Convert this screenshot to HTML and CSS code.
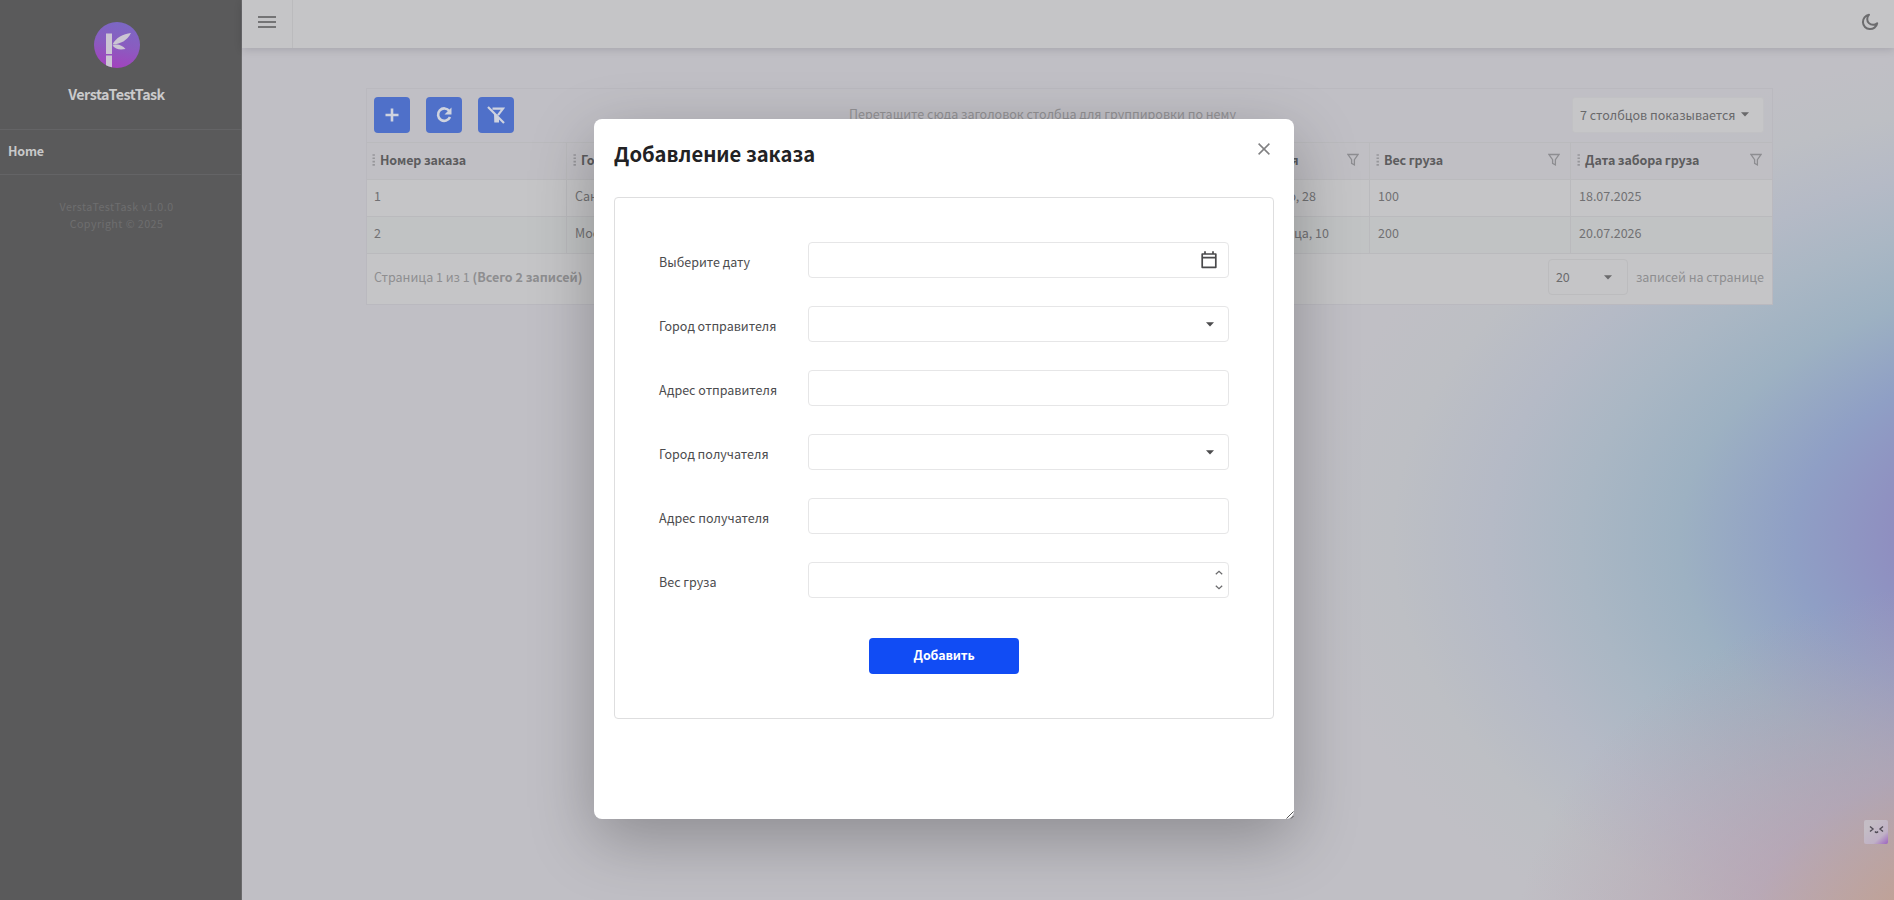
FILE: index.html
```html
<!DOCTYPE html>
<html lang="ru">
<head>
<meta charset="utf-8">
<title>VerstaTestTask</title>
<link rel="stylesheet" href="styles.css">
</head>
<body>
<svg class="defs" width="0" height="0">
  <symbol id="funnel" viewBox="0 0 12 14"><path d="M1 1.500h10L7.400 6.600v5.400L4.600 10.400v-3.800z" fill="none" stroke="currentColor" stroke-width="1.300"/></symbol>
  <symbol id="caret" viewBox="0 0 8 5"><path d="M0 .3h8L4 4.600z" fill="currentColor"/></symbol>
  <symbol id="grip" viewBox="0 0 4 12"><path d="M.5 1h2.400M.5 4.300h2.400M.5 7.600h2.400M.5 10.900h2.400" stroke="currentColor" stroke-width="1.600"/></symbol>
</svg>
<div class="app">
  <aside class="sidebar">
    <div class="brand">
      <svg width="46" height="46" viewBox="0 0 46 46">
        <defs><linearGradient id="logo" x1="0.6" y1="0" x2="0.4" y2="1"><stop offset="0" stop-color="#7b68c4"/><stop offset=".5" stop-color="#8a5cc0"/><stop offset="1" stop-color="#a342bd"/></linearGradient></defs>
        <circle cx="23" cy="23" r="23" fill="url(#logo)"/>
        <path d="M12 11.500h6v20.500h-6zM12 33.500h6v11.700q-3-.6-6-2z" fill="#cbc5d3"/>
        <path d="M18.500 22.500C22 15.500 29 12 37 11C33 18.500 27 22 18.500 22.500zM18.500 23.500C23 21.500 28 23 31.500 27C26 28 21.500 27.500 18.500 23.500z" fill="#cbc5d3"/>
      </svg>
      <span class="brand-name">VerstaTestTask</span>
    </div>
    <nav class="menu"><a class="menu-item">Home</a></nav>
    <div class="legal"><span>VerstaTestTask v1.0.0</span><span>Copyright © 2025</span></div>
  </aside>
  <div class="main">
    <header class="topbar">
      <div class="burger"><svg width="18" height="12" viewBox="0 0 18 12"><path d="M0 1h18M0 6h18M0 11h18" stroke="#747475" stroke-width="2"/></svg></div>
      <svg class="moon" width="18" height="18" viewBox="0 0 18 18"><path d="M8 1.800A7.200 7.200 0 1 0 16.200 10.200A5.600 5.600 0 0 1 8 1.800z" fill="none" stroke="#6c6c6e" stroke-width="2" stroke-linejoin="round"/></svg>
    </header>
    <section class="grid">
      <div class="toolbar">
        <div class="tools">
          <button class="tool"><svg width="14" height="14" viewBox="0 0 14 14"><path d="M7 .5v13M.5 7h13" stroke="currentColor" stroke-width="2.600"/></svg></button>
          <button class="tool"><svg width="18" height="18" viewBox="0 0 18 18"><path d="M14.300 5A6.200 6.200 0 1 0 15 11" fill="none" stroke="currentColor" stroke-width="2.600"/><path d="M16.500 1.500v7H9.500z" fill="currentColor"/></svg></button>
          <button class="tool"><svg width="18" height="18" viewBox="0 0 18 18"><path d="M1 1l16 16M5.500 2.600H16L11 9.200" fill="none" stroke="currentColor" stroke-width="2.200"/><path d="M7 7l5 5v4.500H7.300z" fill="currentColor"/></svg></button>
        </div>
        <span class="group-hint">Перетащите сюда заголовок столбца для группировки по нему</span>
        <div class="columns-picker">7 столбцов показывается<svg width="8" height="5"><use href="#caret"/></svg></div>
      </div>
      <div class="row head">
        <div class="cell"><svg class="grip" width="4" height="12"><use href="#grip"/></svg><span>Номер заказа</span></div>
        <div class="cell"><svg class="grip" width="4" height="12"><use href="#grip"/></svg><span>Го</span></div>
        <div class="cell"></div>
        <div class="cell"></div>
        <div class="cell"><svg class="grip" width="4" height="12"><use href="#grip"/></svg><span>Адрес получателя</span><svg class="funnel" width="12" height="14"><use href="#funnel"/></svg></div>
        <div class="cell"><svg class="grip" width="4" height="12"><use href="#grip"/></svg><span>Вес груза</span><svg class="funnel" width="12" height="14"><use href="#funnel"/></svg></div>
        <div class="cell"><svg class="grip" width="4" height="12"><use href="#grip"/></svg><span>Дата забора груза</span><svg class="funnel" width="12" height="14"><use href="#funnel"/></svg></div>
      </div>
      <div class="row">
        <div class="cell">1</div><div class="cell">Санкт-Петербург</div><div class="cell"></div><div class="cell"></div><div class="cell end first">Невского, 28</div><div class="cell">100</div><div class="cell">18.07.2025</div>
      </div>
      <div class="row alt">
        <div class="cell">2</div><div class="cell">Москва</div><div class="cell"></div><div class="cell"></div><div class="cell end">улица, 10</div><div class="cell">200</div><div class="cell">20.07.2026</div>
      </div>
      <div class="pager">
        <span class="summary">Страница 1 из 1 <b>(Всего 2 записей)</b></span>
        <div class="page-size">20<svg width="8" height="5"><use href="#caret"/></svg></div>
        <span>записей на странице</span>
      </div>
    </section>
  </div>
</div>

<div class="mascot">
  <svg width="24" height="24" viewBox="0 0 24 24">
    <defs><linearGradient id="face" x1=".3" y1=".2" x2="1" y2="1"><stop offset="0" stop-color="#c4bdc5"/><stop offset=".6" stop-color="#c0b1c6"/><stop offset="1" stop-color="#9c62c0"/></linearGradient></defs>
    <rect width="24" height="24" rx="2" fill="url(#face)"/>
    <path d="M6 6.500l3 2.500-3 2.500M19 6.500l-3 2.500 3 2.500M11 11.500q1.500 2 3 0" fill="none" stroke="#504b55" stroke-width="1.400"/>
  </svg>
</div>

<div class="modal">
  <div class="modal-head">
    <h1>Добавление заказа</h1>
    <svg class="close" width="12" height="12" viewBox="0 0 12 12"><path d="M.6.6l10.800 10.800M11.400.6L.6 11.400" stroke="#808082" stroke-width="1.500"/></svg>
  </div>
  <form class="form">
    <label class="field"><span>Выберите дату</span><div class="input"><svg class="cal" width="16" height="18" viewBox="0 0 16 18"><path d="M1.200 3h13.600v13.300H1.200zM1.200 6.700h13.600M4 .3V3M12 .3V3" fill="none" stroke="#4a4a4c" stroke-width="1.700" stroke-linejoin="round"/></svg></div></label>
    <label class="field"><span>Город отправителя</span><div class="input"><svg class="drop" width="8" height="5"><use href="#caret"/></svg></div></label>
    <label class="field"><span>Адрес отправителя</span><div class="input"></div></label>
    <label class="field"><span>Город получателя</span><div class="input"><svg class="drop" width="8" height="5"><use href="#caret"/></svg></div></label>
    <label class="field"><span>Адрес получателя</span><div class="input"></div></label>
    <label class="field"><span>Вес груза</span><div class="input"><svg class="spin" width="8" height="20" viewBox="0 0 8 20"><path d="M.8 4.200L4 1.200l3.200 3M.8 15.800L4 18.800l3.200-3" fill="none" stroke="#6a6a6c" stroke-width="1.200"/></svg></div></label>
    <button class="submit" type="button">Добавить</button>
  </form>
  <svg class="resizer" width="8" height="8" viewBox="0 0 8 8"><path d="M.5 7.500l7-7M5 7.500L7.500 5" stroke="#555" stroke-width="1"/></svg>
</div>
</body>
</html>
```
FILE: styles.css
```css
* { box-sizing: border-box; }
body {
  margin: 0;
  height: 900px;
  overflow: hidden;
  position: relative;
  font: 12.5px/20px "Noto Sans CJK SC", "Noto Sans", sans-serif;
  color: #717173;
}
svg { display: block; flex: none; }
.defs { position: absolute; }
button { font: inherit; border: 0; padding: 0; }

.app { display: flex; height: 900px; }
.sidebar { width: 242px; flex: none; background: #5a5a5b; border-right: 1px solid #6a6a6c; }
.brand { height: 129px; padding: 22px 8px 0 0; display: flex; flex-direction: column; align-items: center; }
.brand-name { margin-top: 16px; font-size: 14.3px; font-weight: 700; letter-spacing: -.55px; color: #cacacb; }
.menu { height: 46px; border: 1px solid #646466; border-width: 1px 0; padding: 11px 8px; }
.menu-item { display: block; font-weight: 700; letter-spacing: -.2px; color: #c8c8c9; }
.legal { padding: 23px 8px 0 0; display: flex; flex-direction: column; align-items: center; font-size: 10.7px; line-height: 17px; letter-spacing: .45px; color: #6e6e6f; }

.main {
  flex: 1;
  min-width: 0;
  background:
    radial-gradient(ellipse 520px 420px at 1740px 960px, #c39f88 0%, rgba(193,159,144,.9) 20%, rgba(184,158,174,.65) 46%, rgba(176,163,192,0) 90%),
    radial-gradient(ellipse 820px 500px at 1880px 540px, #9588bb 0%, #8f8bbf 25%, #8f9fc5 40%, #9db1c2 54%, #aab7c4 66%, #b5bac6 77%, #bdbfc4 89%, rgba(192,191,197,0) 100%),
    #c0bfc5;
}
.topbar { height: 48px; background: #c5c5c7; box-shadow: 0 2px 8px rgba(0,0,20,.13); display: flex; justify-content: space-between; align-items: stretch; padding-right: 15px; }
.burger { width: 51px; border-right: 1px solid #bbbbbd; padding: 16px 0 0 16px; }
.moon { margin-top: 13px; }

.grid { width: 1407px; margin: 40px 0 0 124px; border: 1px solid #bab9bf; }
.toolbar { height: 53px; padding: 0 8px 1px 7px; display: flex; align-items: center; background: rgba(192,191,196,.6); }
.tools { display: flex; gap: 16px; width: 192px; }
.group-hint { margin-left: 283px; padding-bottom: 2px; width: 387px; white-space: nowrap; color: #929194; }
.tool { width: 36px; height: 36px; border-radius: 4px; background: #4f70c9; color: #cfd3df; display: grid; place-items: center; }
.columns-picker { margin-left: auto; width: 192px; height: 36px; border-radius: 3px; background: #c6c6c8; border: 1px solid #c1c1c4; display: flex; align-items: center; gap: 5px; padding: 0 0 1px 7px; color: #69696b; }
.row { display: grid; grid-template-columns: 200px 201px 201px 201px 200px 201px 1fr; height: 37px; background: #c5c5c7; border-top: 1px solid #bababd; }
.row.alt { background: #c1c3c4; border-bottom: 1px solid #bababd; height: 38px; }
.cell { padding: 0 8px 4px; border-right: 1px solid #bababd; display: flex; align-items: center; white-space: nowrap; overflow: hidden; }
.cell:first-child { padding-left: 7px; }
.cell:last-child { border-right: 0; }
.row.head { background: #c0bfc4; font-weight: 700; letter-spacing: -.13px; color: #5c5c5e; }
.row.head .cell { padding: 0 10px 3px 6px; }
.row.head .cell:first-child { padding-left: 5px; }
.grip { margin-right: 4px; color: #96969a; }
.funnel { margin-left: auto; color: #8d8d91; }
.row .cell.end { justify-content: flex-end; padding-right: 40px; }
.row .cell.end.first { padding-right: 53px; }
.pager { height: 50px; background: #c5c5c7; padding: 0 8px 4px 7px; display: flex; align-items: center; color: #8e8e90; }
.summary { margin-right: auto; }
.page-size { width: 80px; height: 36px; margin-right: 8px; border: 1px solid #bcbcbe; border-radius: 4px; padding: 0 15px 0 7px; display: flex; align-items: center; justify-content: space-between; color: #6b6b6d; }

.mascot { position: absolute; right: 6px; top: 820px; }

.modal { position: absolute; left: 594px; top: 119px; width: 700px; height: 700px; padding: 20px; border-radius: 8px; background: #fff; box-shadow: 0 20px 64px rgba(0,0,0,.27); color: #4c4c4e; }
.modal-head { display: flex; justify-content: space-between; height: 58px; }
h1 { margin: 0; font-size: 20.2px; line-height: 30px; font-weight: 700; color: #222224; }
.close { margin: 4px 4px 0 0; }
.form { height: 522px; border: 1px solid #dededf; border-radius: 4px; padding: 44px; }
.field { display: flex; align-items: flex-start; justify-content: space-between; margin-bottom: 28px; }
.field span { padding-top: 10px; }
.input { width: 421px; height: 36px; border: 1px solid #e6e6e7; border-radius: 4px; display: flex; align-items: center; justify-content: flex-end; }
.cal { margin-right: 11px; }
.drop { margin-right: 14px; }
.spin { margin-right: 5px; }
.submit { display: block; width: 150px; height: 36px; margin: 40px 0 0 210px; padding-bottom: 2px; border-radius: 4px; background: #114cf4; color: #fff; font-weight: 700; letter-spacing: -.15px; }
.resizer { position: absolute; right: 0; bottom: 0; }
```
